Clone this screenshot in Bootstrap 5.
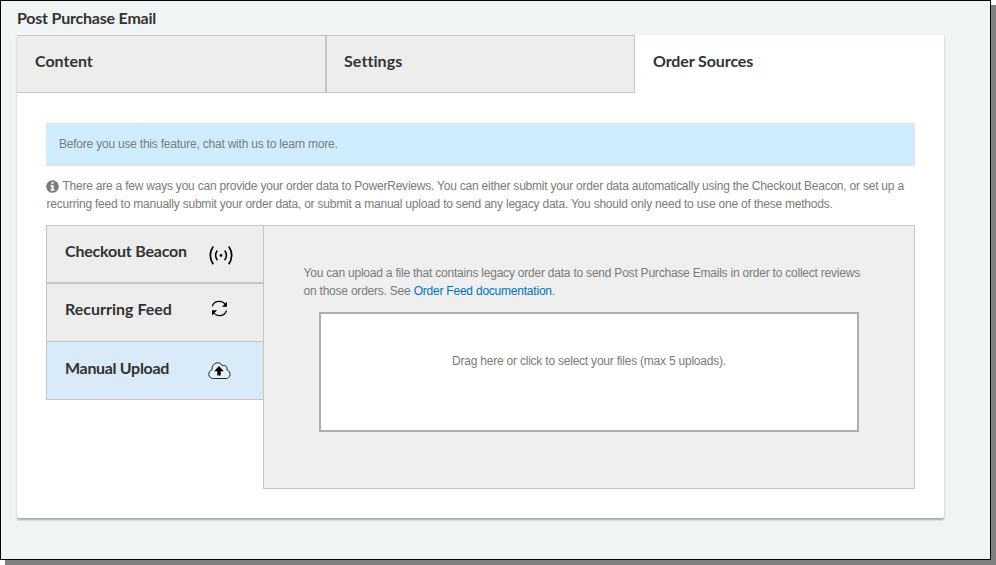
<!DOCTYPE html>
<html lang="en">
<head>
<meta charset="utf-8">
<meta name="viewport" content="width=device-width, initial-scale=1">
<title>Post Purchase Email</title>
<link href="https://cdn.jsdelivr.net/npm/bootstrap@5.3.0/dist/css/bootstrap.min.css" rel="stylesheet">
<style>
body{background:#fff;font:12px/18px "Liberation Sans",Arial,sans-serif;letter-spacing:-.219px;color:#7b7b7b;min-height:565px}
.frame{width:991px;height:560px;border:1px solid #000;background:#f0f4f5;box-shadow:5px 5px 0 #808080;padding:0 46px 0 16px}
.title-font{font-family:Lato,sans-serif;font-weight:700;font-size:16px;line-height:20px;letter-spacing:0;color:#333;white-space:nowrap;margin:0}
.page-title{height:34px;padding-top:7px;letter-spacing:-.21px}
.panel{height:483px;background:#fff;border-radius:0 0 2px 2px;box-shadow:0 2px 2px rgba(0,20,20,.32)}
.top-tab{height:58px;padding:16px 18px 0;text-decoration:none;background:#ededed}
.top-tab.idle{border:1px solid #c6c6c6;padding:15px 17px 0}
.top-tab.first{border-left:0;padding-left:18px}
.inner{padding:30px 29px 0}
.notice{height:43px;padding:11px 12px;margin:0;border:1px solid #dce5ea;border-radius:0;background:#d0edff;color:#7b7b7b}
.intro{margin:11px 0 12px;padding-left:.5px;white-space:nowrap}
.side{width:217px}
.side-tab{height:58px;border:1px solid #c6c6c6;border-right:0;background:#ededed;padding:0 0 0 18px}
.side-tab.mid{border-bottom:0}
.side-tab.active{height:59px;background:#d9eaf8}
.side-tab .title-font{width:143px;padding-top:15px}
.side-tab.beacon .title-font{width:143.5px}
.side-tab.active .title-font{padding-top:16px}
.upload{width:652px;height:264px;border:1px solid #c6c6c6;background:#efefef;padding:38px 39.5px 0}
.upload a{color:#0073bb}
.drop{width:540px;height:120px;margin:12px 0 0 15.5px;border:2px solid #aeaeae;background:#fff;padding-top:38px}
svg{display:block;flex:none}
.info{display:inline-block;vertical-align:-3px;margin-left:-.5px;margin-right:.5px}
.fit-0{letter-spacing:.08px}
.fit-1{letter-spacing:-.1px}
.fit-2{letter-spacing:-.2px}
.fit-3{letter-spacing:-.32px}
</style>
<script src="https://cdn.jsdelivr.net/npm/bootstrap@5.3.0/dist/js/bootstrap.bundle.min.js"></script>
</head>
<body>
<main class="frame">
  <h1 class="title-font page-title">Post Purchase Email</h1>
  <section class="panel">
    <nav class="row g-0">
      <a href="#" class="col title-font top-tab idle first">Content</a>
      <a href="#" class="col title-font top-tab idle"><span class="fit-0">Settings</span></a>
      <a href="#" class="col title-font top-tab bg-white"><span class="fit-1">Order Sources</span></a>
    </nav>
    <div class="inner">
      <div class="alert notice">Before you use this feature, chat with us to learn more.</div>
      <p class="intro"><svg class="info" width="13" height="13" viewBox="0 0 13 13"><circle cx="6.5" cy="6.5" r="6.3" fill="#7b7b7b"/><path d="M5.4 2h2.2v1.8H5.4zM4.5 5h3.1v4.2h1v1.5H4.5V9.200h1V6.500h-1z" fill="#fff"/></svg> There are a few ways you can provide your order data to PowerReviews. You can either submit your order data automatically using the Checkout Beacon, or set up a<br>recurring feed to manually submit your order data, or submit a manual upload to send any legacy data. You should only need to use one of these methods.</p>
      <div class="d-flex align-items-start">
        <nav class="side d-flex flex-column">
          <div class="side-tab beacon d-flex">
            <h2 class="title-font"><span class="fit-2">Checkout Beacon</span></h2>
            <svg class="mt-3" width="24" height="26" viewBox="0 0 24 26" fill="none" stroke="#000"><path d="M4.2 4.5Q-1.6 13 4.2 22.3M19.8 4.5Q25.600 13 19.800 22.300" stroke-width="1.700"/><path d="M8.300 8.500Q4.900 13.300 8.300 18.200M15.700 8.500Q19.100 13.300 15.700 18.200" stroke-width="1.500"/><circle cx="12" cy="13.400" r="1.400" fill="#000" stroke="none"/></svg>
          </div>
          <div class="side-tab mid d-flex">
            <h2 class="title-font"><span>Recurring Feed</span></h2>
            <svg class="mt-3" width="24" height="18" viewBox="0 0 24 18" fill="none" stroke="#000" stroke-width="1.200"><path d="M4.300 6.300C6 .3 14.500 -.3 17.700 5M18.500 10.500C16.500 16.800 8.500 17.200 5.200 12"/><path d="M19 1.700V6.700H14zM4 15.500V10.300H9z" fill="#000" stroke="none"/></svg>
          </div>
          <div class="side-tab active d-flex">
            <h2 class="title-font"><span class="fit-3">Manual Upload</span></h2>
            <svg class="mt-3" width="24" height="24" viewBox="0 0 24 24"><path d="M5.500 20.500C-.6 20.500-.3 12.800 4 11.700C3.500 4.700 12 2.300 14.200 7.800C17.300 6.200 19.600 8.800 18.700 11.700C24 13.700 22.500 20.500 18.200 20.500Z" fill="#e4f0f9" stroke="#222"/><path d="M11 8L15.800 13.300H12.700V17.500H9.300V13.300H6.200Z"/></svg>
          </div>
        </nav>
        <section class="upload">
          <div class="text-nowrap">You can upload a file that contains legacy order data to send Post Purchase Emails in order to collect reviews<br>on those orders. See <a class="text-decoration-none" href="#">Order Feed documentation</a>.</div>
          <div class="drop text-center">Drag here or click to select your files (max 5 uploads).</div>
        </section>
      </div>
    </div>
  </section>
</main>
</body>
</html>
